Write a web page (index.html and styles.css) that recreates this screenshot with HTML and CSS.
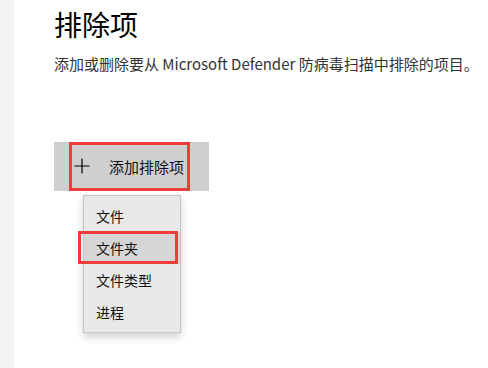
FILE: index.html
```html
<!DOCTYPE html>
<html lang="zh-CN">
<head>
  <meta charset="UTF-8" />
  <title>排除项</title>
  <link rel="stylesheet" href="styles.css">
</head>
<body>
  <div class="layout">
    <aside class="sidebar"></aside>
    <main class="content">
      <h1>排除项</h1>
      <p class="desc">添加或删除要从 Microsoft Defender 防病毒扫描中排除的项目。</p>

      <div class="add-wrap">
        <div class="add-btn">
          <div class="mark">
            <svg class="plus" width="16" height="16" viewBox="0 0 16 16">
              <path d="M8 0.5V15.5M0.5 8H15.5" stroke="#000" stroke-width="1.2" fill="none"/>
            </svg>
            <span class="add-label">添加排除项</span>
          </div>
        </div>

        <ul class="menu">
          <li>文件</li>
          <li class="hover">文件夹</li>
          <li>文件类型</li>
          <li>进程</li>
        </ul>
        <div class="menu-mark"></div>
      </div>
    </main>
  </div>
</body>
</html>
```

FILE: styles.css
```css
html, body {
  margin: 0;
  height: 100%;
  background: #fff;
  font-family: "Noto Sans CJK SC", "Open Sans", sans-serif;
  color: #000;
}
.layout {
  display: flex;
  height: 100%;
}
.sidebar {
  width: 14px;
  background: #f3f3f3;
}
.content {
  padding-left: 40px;
}
h1 {
  margin: 4px 0 0;
  font-size: 28px;
  font-weight: 400;
  line-height: 40px;
}
.desc {
  margin: 10px 0 0;
  font-size: 15px;
  line-height: 20px;
  color: #333;
}
.add-wrap {
  position: relative;
  margin-top: 68px;
}
.add-btn {
  display: inline-flex;
  background: #cfcfcf;
  padding: 0 19px 0 15px;
  height: 49px;
}
.mark {
  display: flex;
  align-items: center;
  width: 115px;
  border: 3px solid #f23b3b;
}
.plus {
  margin-left: 2px;
  margin-top: -2px;
}
.add-label {
  margin-left: 19px;
  font-size: 15px;
  color: #111;
}
.menu {
  position: absolute;
  top: 53px;
  left: 29px;
  width: 96px;
  margin: 0;
  padding: 4px 0;
  list-style: none;
  background: #e8e8e8;
  border: 1px solid #c6c6c6;
  box-shadow: 0 4px 8px rgba(0,0,0,0.18);
}
.menu li {
  height: 32px;
  line-height: 32px;
  padding-left: 12px;
  font-size: 14px;
  color: #111;
}
.menu li.hover {
  background: #d6d6d6;
}
.menu-mark {
  position: absolute;
  top: 89px;
  left: 24px;
  width: 94px;
  height: 27px;
  border: 3px solid #f23b3b;
}
```
